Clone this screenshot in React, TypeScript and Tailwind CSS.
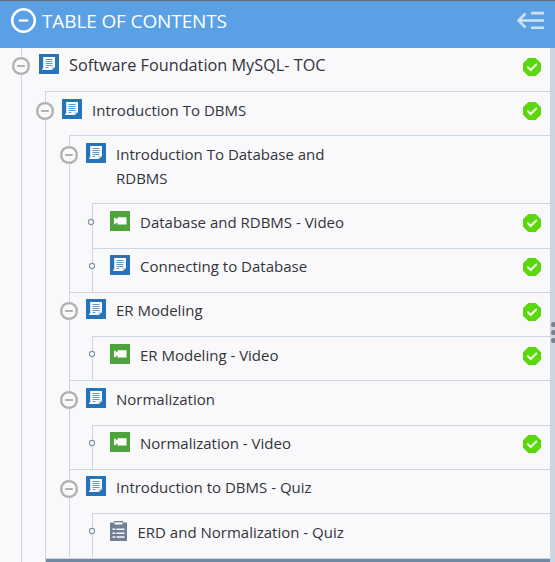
import React from "react";
import clsx from "clsx";

type Kind = "doc" | "video" | "quiz";

function DocIcon() {
  return (
    <svg width="20" height="20" viewBox="0 0 20 20">
      <rect width="20" height="20" fill="#2673ba" />
      <path d="M4.2 3H16V13L12.7 16H3.2V14.5H4.2Z" fill="#fff" />
      <path d="M12.8 15.8V13.2H15.8" stroke="#a8c8e4" strokeWidth=".9" fill="none" />
      <path d="M6.5 5.5H13.5M6.5 7.5H13.5M6.5 9.5H13.5M6.5 11.5H13.5M6.5 13.5H9.5" stroke="#5a97cf" strokeWidth="1" />
    </svg>
  );
}

function VideoIcon() {
  return (
    <svg width="20" height="20" viewBox="0 0 20 20">
      <rect width="20" height="20" fill="#4fa33c" />
      <path d="M4 6.5L7.5 8.3V6.3H16.5V13.5H7.5V11.6L4 13.4Z" fill="#fff" />
    </svg>
  );
}

function QuizIcon() {
  return (
    <svg width="17" height="20" viewBox="0 0 17 20">
      <path d="M0 1.5H4V0H13V1.5H17V20H0Z" fill="#708096" />
      <path d="M4.5 1.3H12.5V3.5H4.5Z" fill="#f9f9fc" />
      <path d="M2.5 8.3H5.3M6.5 8.3H14.5M2.5 12.2H5.3M6.5 12.2H14.5M2.5 16H5.3M6.5 16H14.5" stroke="#f9f9fc" strokeWidth="1.6" />
    </svg>
  );
}

function Toggle() {
  return (
    <svg className="block" width="18" height="18" viewBox="0 0 18 18">
      <path d="M6.5 1.4H11.5L14.7 3.3L16.6 6.5V11.5L14.7 14.7L11.5 16.6H6.5L3.3 14.7L1.4 11.5V6.5L3.3 3.3Z" fill="#f9f9fc" stroke="#b0b0b0" strokeWidth="2.3" strokeLinejoin="round" />
      <path d="M6 9H12" stroke="#b0b0b0" strokeWidth="2.1" strokeLinecap="round" />
    </svg>
  );
}

function Bullet() {
  return (
    <svg className="block" width="8" height="8" viewBox="0 0 8 8">
      <circle cx="4" cy="4" r="2.6" fill="#f9f9fc" stroke="#8492a6" strokeWidth="1.1" />
    </svg>
  );
}

function Check() {
  return (
    <svg className="block" width="18" height="18" viewBox="0 0 18 18">
      <path d="M5.3 0H12.7L18 5.3V12.7L12.7 18H5.3L0 12.7V5.3Z" fill="#5bd80b" />
      <path d="M5 9.3L7.7 12L13.2 6.4" fill="none" stroke="#f0fae8" strokeWidth="2.1" strokeLinecap="round" />
    </svg>
  );
}

interface RowProps {
  kind: Kind;
  label: string;
  height: string;
  done?: boolean;
  leaf?: boolean;
  iconClass: string;
  markerClass: string;
  textClass: string;
  checkClass?: string;
}

function Row({ kind, label, height, done, leaf, iconClass, markerClass, textClass, checkClass }: RowProps) {
  return (
    <div className={clsx("flex items-start border-[#cad6e2]", height)}>
      <span className={clsx("shrink-0", leaf ? "-ml-[5px] w-[8px]" : "-ml-[10px] w-[18px]", markerClass)}>
        {leaf ? <Bullet /> : <Toggle />}
      </span>
      <span className={clsx("shrink-0", iconClass)}>
        {kind === "doc" ? <DocIcon /> : kind === "video" ? <VideoIcon /> : <QuizIcon />}
      </span>
      <span className={clsx("leading-[24px] text-[#333438]", textClass)}>{label}</span>
      {done && <span className={clsx("mr-[9px] ml-auto", checkClass)}><Check /></span>}
    </div>
  );
}

export default function App() {
  return (
    <div className="flex h-[562px] w-[555px] flex-col overflow-hidden bg-[#f9f9fc] font-['Open_Sans',sans-serif]">
      <header className="flex h-[48px] shrink-0 items-start border-t border-[#636b75] bg-[#5aa0e5] text-white">
        <svg className="mt-[6px] ml-[10px] shrink-0" width="27" height="27" viewBox="0 0 27 27">
          <circle cx="13.5" cy="13.5" r="11.3" fill="none" stroke="#fff" strokeWidth="2.5" />
          <path d="M8.8 13.5H18.2" stroke="#fff" strokeWidth="2.2" />
        </svg>
        <h1 className="mt-[6px] ml-[5px] text-[19px] leading-[28px] tracking-[-0.12px]">TABLE OF CONTENTS</h1>
        <svg className="mt-[10px] mr-[11px] ml-auto" width="27" height="20" viewBox="0 0 27 20">
          <path d="M8.5 2.5L1.5 9.5L8.5 16.7M1.5 9.5H27M14 2.1H27M14 16.8H27" stroke="#cfe2f7" strokeWidth="2.6" fill="none" />
        </svg>
      </header>
      <div className="flex min-h-0 flex-1">
        <main className="min-w-0 flex-1">
          <div className="ml-[21px] h-full border-l border-[#cad6e2]">
            <Row kind="doc" label="Software Foundation MySQL- TOC" height="h-[43px]" done markerClass="mt-[9px]" iconClass="mt-[6px] ml-[9px]" textClass="mt-[5px] ml-[10px] text-[16.25px]" checkClass="mt-[10px]" />
            <div className="ml-[23px] border-l border-[#cad6e2]">
              <Row kind="doc" label="Introduction To DBMS" height="h-[44px] border-t" done markerClass="mt-[10px]" iconClass="mt-[7px] ml-[8px]" textClass="mt-[6px] ml-[10px] text-[15px]" checkClass="mt-[10px]" />
              <div className="ml-[23px] border-l border-[#cad6e2]">
                <Row kind="doc" label="Introduction To Database and RDBMS" height="h-[68px] border-t" markerClass="mt-[10px]" iconClass="mt-[7px] ml-[8px]" textClass="mt-[6px] ml-[10px] w-[230px] text-[15px]" />
                <div className="ml-[22px] border-l border-[#cad6e2]">
                  <Row leaf kind="video" label="Database and RDBMS - Video" height="h-[45px] border-t" done markerClass="mt-[14px] -translate-x-px" iconClass="mt-[7px] ml-[14px]" textClass="mt-[6px] ml-[10px] text-[15px]" checkClass="mt-[10px]" />
                  <Row leaf kind="doc" label="Connecting to Database" height="h-[44px] border-t" done markerClass="mt-[13px]" iconClass="mt-[6px] ml-[14px]" textClass="mt-[5px] ml-[10px] text-[15px]" checkClass="mt-[9px]" />
                </div>
                <Row kind="doc" label="ER Modeling" height="h-[44px] border-t" done markerClass="mt-[9px]" iconClass="mt-[6px] ml-[8px]" textClass="mt-[5px] ml-[10px] text-[15px]" checkClass="mt-[10px]" />
                <div className="ml-[22px] border-l border-[#cad6e2]">
                  <Row leaf kind="video" label="ER Modeling - Video" height="h-[44px] border-t" done markerClass="mt-[13px]" iconClass="mt-[7px] ml-[14px]" textClass="mt-[6px] ml-[10px] text-[15px]" checkClass="mt-[10px]" />
                </div>
                <Row kind="doc" label="Normalization" height="h-[45px] border-t" markerClass="mt-[10px]" iconClass="mt-[7px] ml-[8px]" textClass="mt-[6px] ml-[10px] text-[15px]" />
                <div className="ml-[22px] border-l border-[#cad6e2]">
                  <Row leaf kind="video" label="Normalization - Video" height="h-[44px] border-t" done markerClass="mt-[13px]" iconClass="mt-[6px] ml-[14px]" textClass="mt-[5px] ml-[10px] text-[15px]" checkClass="mt-[9px]" />
                </div>
                <Row kind="doc" label="Introduction to DBMS - Quiz" height="h-[44px] border-t" markerClass="mt-[10px]" iconClass="mt-[6px] ml-[8px]" textClass="mt-[5px] ml-[10px] text-[15px]" />
                <div className="ml-[22px] border-l border-[#cad6e2]">
                  <Row leaf kind="quiz" label="ERD and Normalization - Quiz" height="h-[44px] border-t" markerClass="mt-[13px]" iconClass="mt-[7px] ml-[14px]" textClass="mt-[6px] ml-[10.5px] text-[15px]" />
                </div>
              </div>
              <div className="mt-px h-[4px] border-t border-[#cad6e2] bg-[#7188a3]" />
            </div>
          </div>
        </main>
        <aside className="flex w-[5px] shrink-0 flex-col gap-[3px] overflow-hidden bg-[#cad6e2] pt-[274px] pl-px">
          <i className="size-[5px] shrink-0 rounded-full bg-[#758399]" />
          <i className="size-[5px] shrink-0 rounded-full bg-[#758399]" />
          <i className="size-[5px] shrink-0 rounded-full bg-[#758399]" />
        </aside>
      </div>
    </div>
  );
}
